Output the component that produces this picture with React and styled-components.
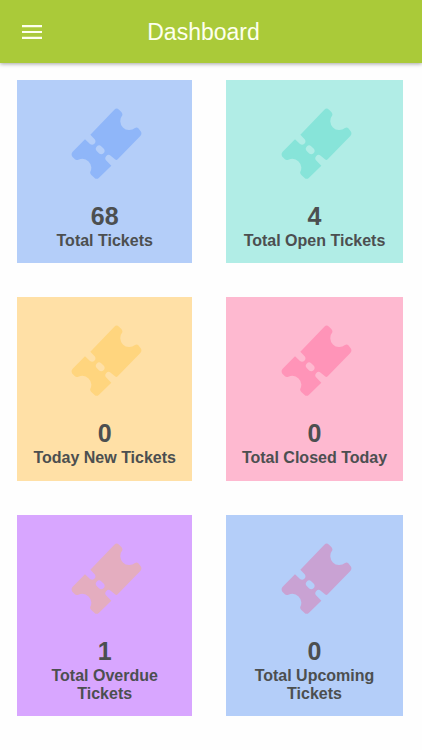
import React from "react"
import styled, { createGlobalStyle } from "styled-components"

const GlobalStyle = createGlobalStyle`
  * {
    box-sizing: border-box;
  }

  body {
    margin: 0;
    background: #fefefe;
    color: #4c4f50;
    font-family: "Liberation Sans", Arial, sans-serif;
  }
`

const HeaderBar = styled.header`
  height: 63px;
  padding: 0 22px;
  display: grid;
  grid-template-columns: 60px 1fr 75px;
  align-items: center;
  background: #aaca39;
  box-shadow: 0 1px 4px rgba(0, 0, 0, 0.36);
`

const MenuButton = styled.button`
  width: 20px;
  height: 14px;
  padding: 0;
  border: 0;
  background: none;
  cursor: pointer;

  >svg {
    display: block;
  }
`

const Title = styled.h1`
  margin: 1px 0 0;
  color: #fdffee;
  font-size: 23px;
  font-weight: 400;
  line-height: 28px;
  text-align: center;
`

const CardGrid = styled.main`
  padding: 17px 19px 30px 17px;
  display: grid;
  grid-template-columns: 175.4px 176.6px;
  grid-template-rows: 183px 184px 201px;
  row-gap: 34px;
  column-gap: 33.8px;
`

const Card = styled.section`
  padding: 28px 14px 0;
  background: ${props => props.$color};
  text-align: center;
`

const IconRow = styled.div`
  padding-left: 4px;
`

const TicketSvg = styled.svg`
  display: block;
  width: 71px;
  height: 71px;
  margin: 0 auto;
  color: ${props => props.$color};
`

const Count = styled.div`
  margin-top: 22px;
  font-size: 25px;
  font-weight: 700;
  line-height: 30px;
`

const Label = styled.div`
  margin-top: 1px;
  font-size: 16px;
  font-weight: 700;
  line-height: 18px;
`

const cards = [
  { count: 68, label: "Total Tickets", color: "#b4cef9", icon: "#8fb6f9" },
  { count: 4, label: "Total Open Tickets", color: "#b1ede6", icon: "#87e4d9" },
  { count: 0, label: "Today New Tickets", color: "#ffe0a6", icon: "#ffd57e" },
  { count: 0, label: "Total Closed Today", color: "#feb9d0", icon: "#ff94b8" },
  { count: 1, label: "Total Overdue Tickets", color: "#d8a6ff", icon: "#e4adbf" },
  { count: 0, label: "Total Upcoming Tickets", color: "#b4cef9", icon: "#c9a2d3" },
]

const TicketIcon = ({ color }) => (
  <IconRow>
    <TicketSvg $color={color} viewBox="35 38 213 213" aria-hidden="true">
      <path
        fill="currentColor"
        fillRule="evenodd"
        d="M165 43Q172 36 179 43L186 50Q190 54 189 60A27 27 0 0 0 227 98Q233 95 237 99L244 108Q249 115 243 122L175 192Q171 196 167 192L154 181A10 10 0 0 0 140 195L156 211L119 247Q112 254 105 247L96 239Q91 234 93 229A27 27 0 0 0 57 193Q50 195 46 191L39 184Q34 176 40 169L77 132L92 146A10 10 0 0 0 106 132L93 118ZM125.5 152.5L133.5 160.5A10 10 0 0 1 119.5 174.5L111.5 166.5A10 10 0 0 1 125.5 152.5Z"
      />
    </TicketSvg>
  </IconRow>
)

const Header = ({ title }) => (
  <HeaderBar>
    <MenuButton aria-label="Menu">
      <svg width="20" height="14" viewBox="0 0 20 14" fill="#fdffee">
        <path d="M0 0h20v2.2H0zM0 5.9h20v2.2H0zM0 11.8h20v2.2H0z" />
      </svg>
    </MenuButton>
    <Title>{title}</Title>
  </HeaderBar>
)

const App = () => (
  <>
    <GlobalStyle />
    <Header title="Dashboard" />
    <CardGrid>
      {cards.map(card => (
        <Card key={card.label} $color={card.color}>
          <TicketIcon color={card.icon} />
          <Count>{card.count}</Count>
          <Label>{card.label}</Label>
        </Card>
      ))}
    </CardGrid>
  </>
)

export default App
